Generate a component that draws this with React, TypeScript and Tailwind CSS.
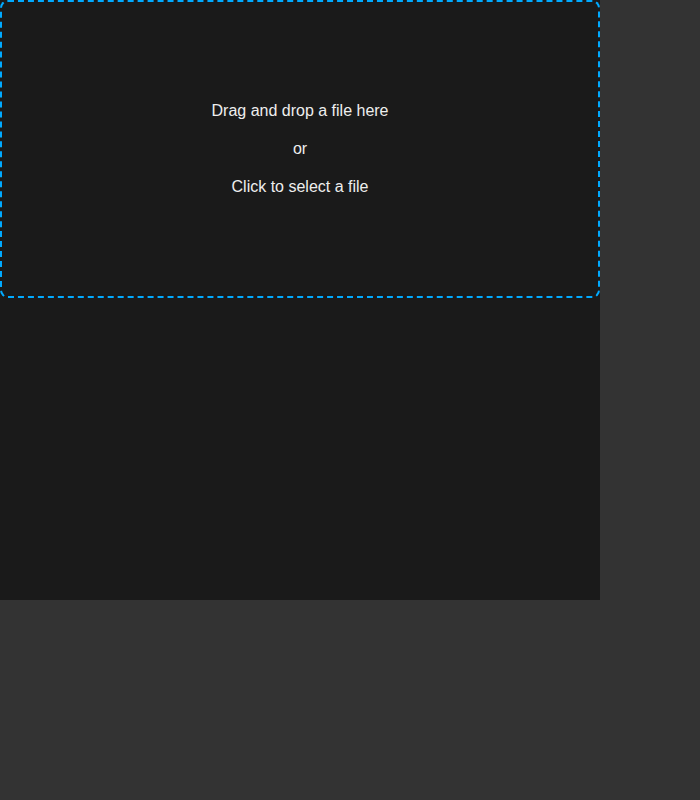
export default function App() {
  return (
    <div className="min-h-screen w-full bg-[#333333]" style={{ fontFamily: '"Liberation Sans", Arial, sans-serif' }}>
      <div className="w-[600px] h-[600px] bg-[#1a1a1a]">
        <div className="h-[298px] w-[600px] border-2 border-dashed border-[#00aaff] rounded-[8px] flex flex-col items-center justify-center gap-[16px] text-[16px] leading-[22px] text-[#eeeeee] cursor-pointer">
          <p>Drag and drop a file here</p>
          <p>or</p>
          <p>Click to select a file</p>
        </div>
      </div>
    </div>
  );
}
